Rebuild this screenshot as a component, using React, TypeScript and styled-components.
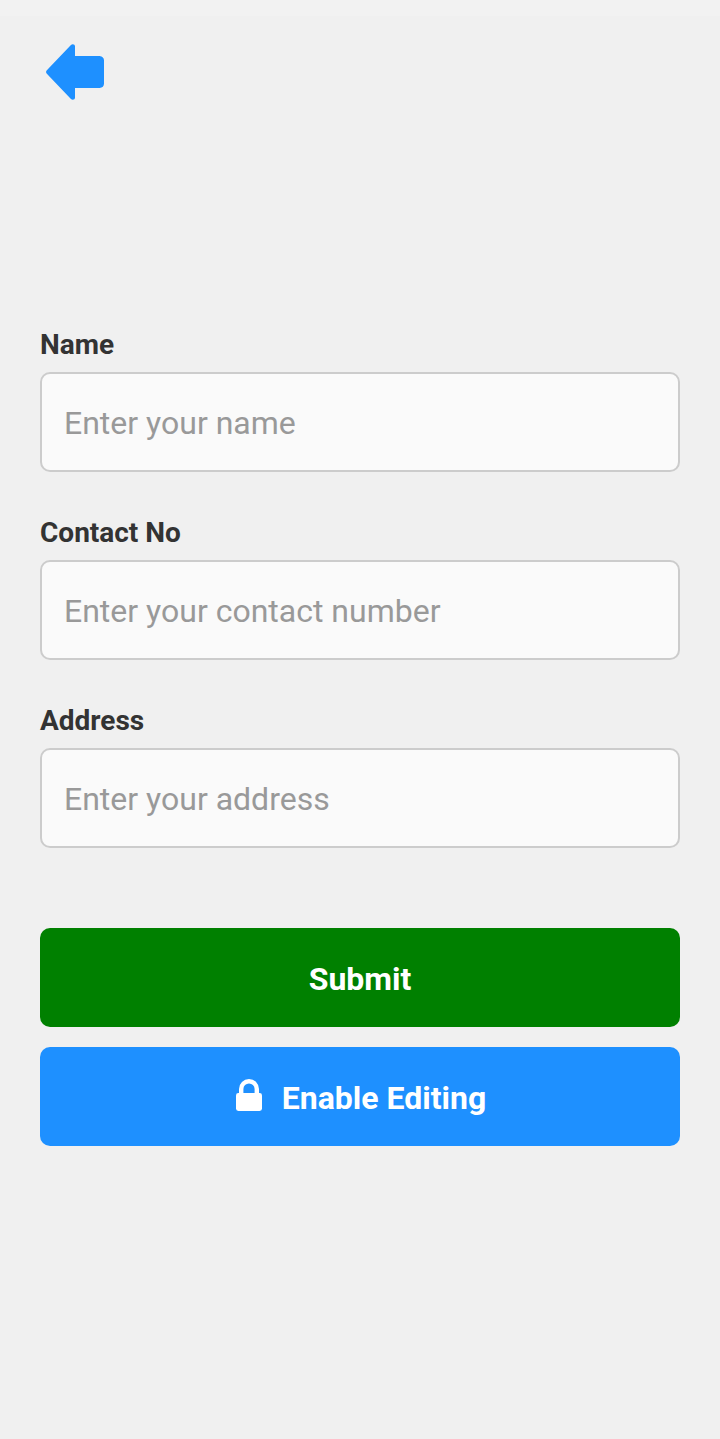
import React from "react";
import styled, { createGlobalStyle } from "styled-components";

const GlobalStyle = createGlobalStyle`
  *, *::before, *::after { box-sizing: border-box; }
  body {
    margin: 0;
    background: #f0f0f0;
    font-family: Roboto, "Liberation Sans", sans-serif;
  }
`;

const Screen = styled.div`
  min-height: 100vh;
  background: #f0f0f0;
`;

const StatusStrip = styled.div`
  height: 16px;
  background: #f2f2f2;
`;

const Header = styled.header`
  display: flex;
  padding: 24px 40px 0;
`;

const BackButton = styled.button`
  display: flex;
  padding: 0;
  border: 0;
  background: none;
  color: #1e90ff;
  cursor: pointer;
`;

const Form = styled.form`
  display: flex;
  flex-direction: column;
  padding: 224px 40px 40px;
`;

const Fields = styled.div`
  display: flex;
  flex-direction: column;
  gap: 44px;
`;

const Field = styled.div`
  display: flex;
  flex-direction: column;
  gap: 10px;
`;

const Label = styled.label`
  color: #333;
  font-size: 28px;
  font-weight: 700;
  line-height: 34px;
`;

const Input = styled.input`
  width: 100%;
  height: 100px;
  padding: 2px 22px 0;
  border: 2px solid #ccc;
  border-radius: 10px;
  background: #fafafa;
  color: #333;
  font-family: inherit;
  font-size: 32px;

  &::placeholder {
    color: #999;
    opacity: 1;
  }
`;

const Actions = styled.div`
  display: flex;
  flex-direction: column;
  gap: 20px;
  margin-top: 80px;
`;

const ActionButton = styled.button<{ $color: string }>`
  display: flex;
  align-items: center;
  justify-content: center;
  gap: 16px;
  width: 100%;
  height: 99px;
  padding: 2px 0 0;
  border: 0;
  border-radius: 10px;
  background: ${({ $color }) => $color};
  color: #fff;
  font-family: inherit;
  font-size: 32px;
  font-weight: 700;
  line-height: 38px;
  cursor: pointer;
`;

const LockIcon = styled.svg`
  flex: none;
  margin-bottom: 6px;
`;

const fields = [
  { id: "name", label: "Name", placeholder: "Enter your name", type: "text" },
  { id: "contact", label: "Contact No", placeholder: "Enter your contact number", type: "tel" },
  { id: "address", label: "Address", placeholder: "Enter your address", type: "text" },
];

export default function App() {
  return (
    <Screen>
      <GlobalStyle />
      <StatusStrip />
      <Header>
        <BackButton type="button" aria-label="Back">
          <svg width="64" height="64" viewBox="0 0 64 64" fill="currentColor" aria-hidden="true">
            <path d="M6.6 30.6 30.7 5.2C32.2 3.4 35 4 35 6.4V16H59.5Q64 16.5 64 20.5V43.5Q64 47.5 59.5 48H35V57.6C35 60 32.2 60.6 30.7 58.8L6.6 33.4Q5.4 32 6.6 30.6Z" />
          </svg>
        </BackButton>
      </Header>
      <Form onSubmit={(e) => e.preventDefault()}>
        <Fields>
          {fields.map((f) => (
            <Field key={f.id}>
              <Label htmlFor={f.id}>{f.label}</Label>
              <Input id={f.id} type={f.type} placeholder={f.placeholder} />
            </Field>
          ))}
        </Fields>
        <Actions>
          <ActionButton type="submit" $color="#008000">
            Submit
          </ActionButton>
          <ActionButton type="button" $color="#1e90ff">
            <LockIcon width="32" height="32" viewBox="0 0 32 32" fill="none" aria-hidden="true">
              <path
                d="M7.2 16V10a7.8 7.8 0 0 1 15.6 0V16"
                stroke="currentColor"
                strokeWidth="4.4"
              />
              <rect x="2" y="14" width="26" height="18" rx="2.4" fill="currentColor" />
            </LockIcon>
            Enable Editing
          </ActionButton>
        </Actions>
      </Form>
    </Screen>
  );
}
